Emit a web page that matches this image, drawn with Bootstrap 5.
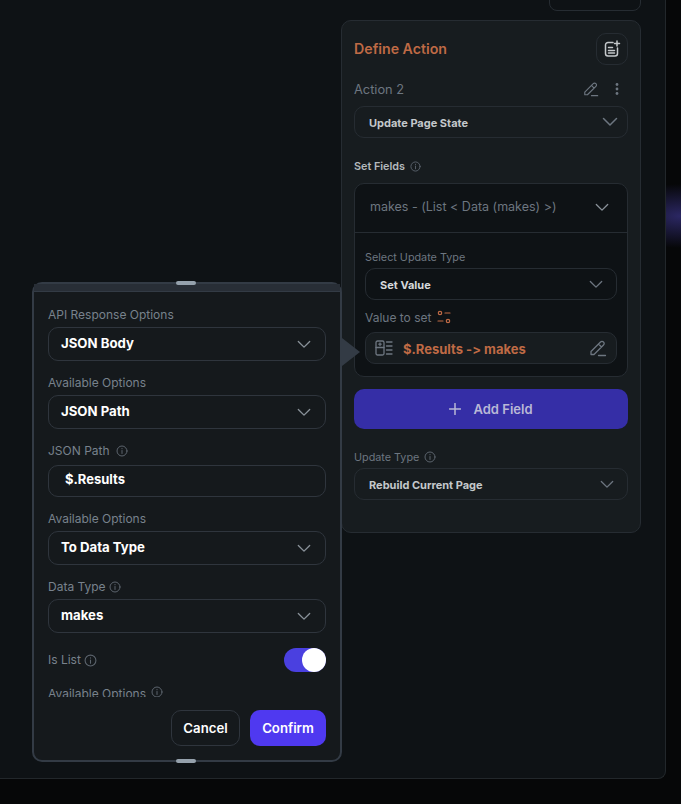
<!DOCTYPE html>
<html lang="en">

<head>
  <meta charset="UTF-8">
  <title>Define Action</title>
  <meta name="viewport" content="width=device-width, initial-scale=1.0" />
  <link href="https://cdn.jsdelivr.net/npm/bootstrap@5.3.0/dist/css/bootstrap.min.css" rel="stylesheet" />
  <style>
    html, body { height: 100%; }
    body {
      background: #050607;
      font-family: "Inter", "Liberation Sans", sans-serif;
      font-variant-ligatures: none;
      color: #fff;
      overflow: hidden;
    }
    .screen {
      width: 681px;
      height: 804px;
      position: relative;
      overflow: hidden;
      background: radial-gradient(ellipse 70px 32px at 680px 216px, #2b2763 0%, rgba(43, 39, 99, 0) 100%), #060708;
    }
    .builder {
      width: 666px;
      height: 779px;
      background: #0e1215;
      border-right: 1px solid #22272b;
      border-bottom: 1px solid #22272b;
      border-bottom-right-radius: 8px;
      position: relative;
    }
    .stub-card {
      position: absolute;
      left: 549px;
      top: -10px;
      width: 92px;
      height: 21px;
      border: 1px solid #262c32;
      border-radius: 8px;
    }
    .action-panel {
      position: absolute;
      left: 341px;
      top: 20px;
      width: 300px;
      height: 513px;
      background: #171c1f;
      border: 1px solid #262c32;
      border-radius: 10px;
      padding: 12px 12px 0;
    }
    .panel-title { font-size: 14.2px; font-weight: 600; color: #bf6a45; line-height: 18px; }
    .square-btn {
      width: 32px;
      height: 32px;
      border: 1px solid #262c32;
      border-radius: 10px;
    }
    .nudge { margin-top: 2px; }
    .dim-label { font-size: 12.8px; color: #6d7680; line-height: 16px; }
    .value-label { font-size: 12px; color: #6d7680; line-height: 16px; }
    .small-label { font-size: 10.8px; color: #6d7680; line-height: 14px; }
    .select-label { margin-top: 1px; margin-bottom: 3px; }
    .bright-label { font-size: 10.8px; font-weight: 600; color: #b4b9bd; line-height: 16px; }
    .action-row { margin-top: 16px; margin-bottom: 9px; height: 16px; }
    .action-tools { gap: 14px; margin-right: 7px; }
    .fields-row { margin-top: 20px; margin-bottom: 9px; gap: 5px; height: 16px; }
    .pick {
      border: 1px solid #262c32;
      border-radius: 10px;
      height: 32px;
      font-size: 11px;
      font-weight: 700;
      color: #c4c8cb;
      padding: 0 13px 0 14px;
    }
    .pick-first { padding-right: 9px; }
    .pick-inner { color: #d5d8da; }
    .fields-box {
      background: #0e1215;
      border: 1px solid #262c32;
      border-radius: 10px;
      height: 194px;
    }
    .fields-head {
      height: 49px;
      border-bottom: 1px solid #262c32;
      font-size: 12.5px;
      color: #6d7680;
      padding: 0 18px 1px 15px;
    }
    .fields-body { padding: 17px 10px 0; }
    .value-row { margin-top: 9px; margin-bottom: 7px; gap: 6px; height: 16px; }
    .value-box {
      height: 32px;
      background: #171c1f;
      border: 1px solid #262c32;
      border-radius: 10px;
      padding: 0 9px;
      font-size: 13px;
      font-weight: 700;
      color: #bf6a45;
      gap: 10px;
    }
    .value-text { margin-top: 3px; }
    .add-field {
      height: 40px;
      margin-top: 12px;
      background: #352ea6;
      border: 0;
      border-radius: 10px;
      color: #b9b8d6;
      font-size: 13px;
      font-weight: 600;
      width: 100%;
      gap: 12px;
    }
    .update-row { margin-top: 21px; margin-bottom: 4px; gap: 5px; height: 14px; }
    .option-sheet {
      position: absolute;
      left: 32px;
      top: 282px;
      width: 310px;
      height: 480px;
      background: #15191c;
      border: 2px solid #333b45;
      border-radius: 10px;
      padding: 0 14px;
    }
    .sheet-strip {
      height: 8px;
      margin: 0 -14px 15px;
      background: #282e36;
      border-bottom: 1px solid #333b45;
    }
    .grip {
      position: absolute;
      left: 142px;
      width: 20px;
      height: 4px;
      border-radius: 2px;
      background: #95a1ac;
    }
    .grip-top { top: -3px; }
    .grip-bottom { bottom: -3px; }
    .pointer {
      position: absolute;
      left: 342px;
      top: 338px;
      width: 0;
      height: 0;
      border-top: 14px solid transparent;
      border-bottom: 14px solid transparent;
      border-left: 18px solid #333b45;
    }
    .sheet-label { font-size: 12px; color: #78828c; line-height: 16px; }
    .label-row { gap: 5px; margin-bottom: 4px; }
    .label-row-tall { gap: 6px; margin-bottom: 6px; }
    .label-row-near { gap: 3px; }
    .sheet-pick {
      border: 1px solid #2f353d;
      border-radius: 10px;
      height: 34px;
      padding: 0 14px 0 12px;
      font-size: 13.2px;
      font-weight: 700;
      color: #fff;
      margin-bottom: 14px;
    }
    .path-input { height: 32px; padding: 0 0 2px 16px; font-size: 13px; }
    .is-list { height: 24px; margin-top: 15px; }
    .list-tip { gap: 3px; }
    .switch-on {
      width: 42px;
      height: 24px;
      background: #4a40e0;
      border-radius: 12px;
    }
    .switch-knob { width: 24px; height: 24px; background: #fff; border-radius: 50%; }
    .cut-row { height: 11px; overflow: hidden; margin-top: 14px; gap: 5px; }
    .sheet-actions { margin-top: 13px; gap: 10px; }
    .cancel-btn, .confirm-btn {
      height: 36px;
      border-radius: 10px;
      font-size: 13.2px;
      font-weight: 600;
      color: #fff;
      padding: 2px 0 0;
    }
    .cancel-btn { width: 69px; background: transparent; border: 1px solid #2f353d; }
    .confirm-btn { width: 76px; background: #4f39f0; border: 0; }
    .ico { display: block; flex: none; fill: none; stroke-linecap: round; stroke-linejoin: round; }
  </style>
</head>

<body>
  <svg width="0" height="0" class="position-absolute">
    <symbol id="chev" viewBox="0 0 16 10"><path d="M1.500 1.500 8 8l6.500-6.500" /></symbol>
    <symbol id="info" viewBox="0 0 12 12"><circle cx="6" cy="6" r="5" /><path d="M6 5.500v3M6 3.500v.3" /></symbol>
    <symbol id="pen" viewBox="0 0 18 18"><path d="M2 12.500 11.500 3a2 2 0 0 1 3 0 2 2 0 0 1 0 3L5 15.500H2zM9.500 5l3 3M9.500 16.500h7" /></symbol>
  </svg>

  <div class="screen">
    <div class="builder">
      <div class="stub-card"></div>

      <div class="action-panel">
        <div class="d-flex align-items-center justify-content-between">
          <div class="panel-title">Define Action</div>
          <div class="square-btn d-flex align-items-center justify-content-center">
            <svg class="ico" width="18" height="18" viewBox="0 0 18 18" stroke="#c4c8cb" stroke-width="1.500">
              <path d="M10 2.500H5A2.500 2.500 0 0 0 2.500 5v8.500A2.500 2.500 0 0 0 5 16h7a2.500 2.500 0 0 0 2.500-2.500V8" />
              <path d="M5.500 7.500h4M5.500 10.500h6M5.500 13h6M14 1v5M11.500 3.500h5" />
            </svg>
          </div>
        </div>

        <div class="action-row d-flex align-items-center justify-content-between">
          <div class="dim-label nudge">Action 2</div>
          <div class="action-tools d-flex align-items-center">
            <svg class="ico" width="16" height="16" stroke="#6d7680" stroke-width="1.300"><use href="#pen" /></svg>
            <svg class="ico" width="8" height="16" viewBox="0 0 8 16"><circle cx="4" cy="3.500" r="1.400" fill="#6d7680" /><circle cx="4" cy="8" r="1.400" fill="#6d7680" /><circle cx="4" cy="12.500" r="1.400" fill="#6d7680" /></svg>
          </div>
        </div>

        <div class="pick pick-first d-flex align-items-center justify-content-between">
          <span class="nudge">Update Page State</span>
          <svg class="ico" width="16" height="10" stroke="#6d7680" stroke-width="1.500"><use href="#chev" /></svg>
        </div>

        <div class="fields-row d-flex align-items-center">
          <span class="bright-label nudge">Set Fields</span>
          <svg class="ico" width="11" height="11" stroke="#5c646d" stroke-width="1"><use href="#info" /></svg>
        </div>

        <div class="fields-box">
          <div class="fields-head d-flex align-items-center justify-content-between">
            <span>makes - (List &lt; Data (makes) &gt;)</span>
            <svg class="ico" width="14" height="9" stroke="#8a929a" stroke-width="1.500"><use href="#chev" /></svg>
          </div>
          <div class="fields-body">
            <div class="small-label select-label">Select Update Type</div>
            <div class="pick pick-inner d-flex align-items-center justify-content-between">
              <span class="nudge">Set Value</span>
              <svg class="ico" width="14" height="9" stroke="#6d7680" stroke-width="1.500"><use href="#chev" /></svg>
            </div>
            <div class="value-row d-flex align-items-center">
              <span class="value-label nudge">Value to set</span>
              <svg class="ico" width="14" height="14" viewBox="0 0 14 14" stroke="#bf6a45" stroke-width="1.200">
                <circle cx="3" cy="3" r="1.700" /><path d="M8 3h5M1 11h5" /><circle cx="11" cy="11" r="1.700" />
              </svg>
            </div>
            <div class="value-box d-flex align-items-center">
              <svg class="ico" width="18" height="16" viewBox="0 0 18 16" stroke="#6d7680" stroke-width="1.300">
                <rect x="1" y="1" width="8" height="14" rx="1.500" /><path d="M1 7.500h8M5 3v2.500M3.800 4.200h2.400M11.500 2H17M11.500 6H17M11.500 10H17M11.500 14H17" />
              </svg>
              <span class="value-text flex-grow-1">$.Results -&gt; makes</span>
              <svg class="ico" width="18" height="18" stroke="#6d7680" stroke-width="1.300"><use href="#pen" /></svg>
            </div>
          </div>
        </div>

        <button class="add-field d-flex align-items-center justify-content-center" type="button">
          <svg class="ico" width="12" height="12" viewBox="0 0 12 12" stroke="#b9b8d6" stroke-width="1.500"><path d="M6 .5v11M.5 6h11" /></svg>
          <span class="nudge">Add Field</span>
        </button>

        <div class="update-row d-flex align-items-center">
          <span class="small-label nudge">Update Type</span>
          <svg class="ico" width="12" height="12" stroke="#5c646d" stroke-width="1"><use href="#info" /></svg>
        </div>
        <div class="pick d-flex align-items-center justify-content-between">
          <span class="nudge">Rebuild Current Page</span>
          <svg class="ico" width="14" height="9" stroke="#6d7680" stroke-width="1.500"><use href="#chev" /></svg>
        </div>
      </div>

      <div class="pointer"></div>

      <div class="option-sheet">
        <div class="grip grip-top"></div>
        <div class="grip grip-bottom"></div>
        <div class="sheet-strip"></div>

        <div class="sheet-label label-row">API Response Options</div>
        <div class="sheet-pick d-flex align-items-center justify-content-between">
          <span>JSON Body</span>
          <svg class="ico" width="14" height="9" stroke="#8a929a" stroke-width="1.500"><use href="#chev" /></svg>
        </div>

        <div class="sheet-label label-row">Available Options</div>
        <div class="sheet-pick d-flex align-items-center justify-content-between">
          <span>JSON Path</span>
          <svg class="ico" width="14" height="9" stroke="#8a929a" stroke-width="1.500"><use href="#chev" /></svg>
        </div>

        <div class="label-row-tall d-flex align-items-center">
          <span class="sheet-label">JSON Path</span>
          <svg class="ico" width="12" height="12" stroke="#5c646d" stroke-width="1"><use href="#info" /></svg>
        </div>
        <div class="sheet-pick path-input d-flex align-items-center">$.Results</div>

        <div class="sheet-label label-row">Available Options</div>
        <div class="sheet-pick d-flex align-items-center justify-content-between">
          <span>To Data Type</span>
          <svg class="ico" width="14" height="9" stroke="#8a929a" stroke-width="1.500"><use href="#chev" /></svg>
        </div>

        <div class="label-row label-row-near d-flex align-items-center">
          <span class="sheet-label">Data Type</span>
          <svg class="ico" width="12" height="12" stroke="#5c646d" stroke-width="1"><use href="#info" /></svg>
        </div>
        <div class="sheet-pick d-flex align-items-center justify-content-between mb-0">
          <span>makes</span>
          <svg class="ico" width="14" height="9" stroke="#8a929a" stroke-width="1.500"><use href="#chev" /></svg>
        </div>

        <div class="is-list d-flex align-items-center justify-content-between">
          <div class="list-tip d-flex align-items-center">
            <span class="sheet-label">Is List</span>
            <svg class="ico" width="13" height="13" stroke="#5c646d" stroke-width="1"><use href="#info" /></svg>
          </div>
          <div class="switch-on d-flex justify-content-end"><div class="switch-knob"></div></div>
        </div>

        <div class="cut-row d-flex align-items-start">
          <span class="sheet-label">Available Options</span>
          <svg class="ico" width="12" height="12" stroke="#5c646d" stroke-width="1"><use href="#info" /></svg>
        </div>

        <div class="sheet-actions d-flex justify-content-end">
          <button class="cancel-btn" type="button">Cancel</button>
          <button class="confirm-btn" type="button">Confirm</button>
        </div>
      </div>
    </div>
  </div>

  <script src="https://cdn.jsdelivr.net/npm/bootstrap@5.3.0/dist/js/bootstrap.bundle.min.js"></script>
</body>

</html>
